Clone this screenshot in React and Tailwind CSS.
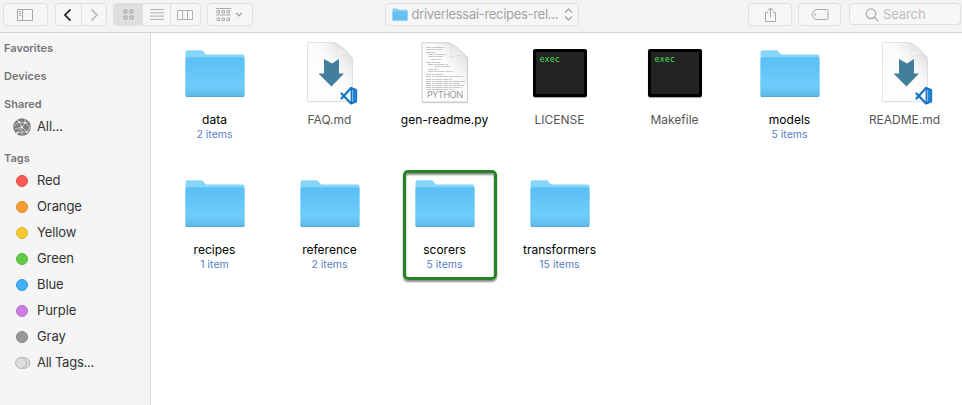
import React from "react";

const tags = [
  { name: "Red", dot: "bg-[#fc5b57] border-[#e64b48]" },
  { name: "Orange", dot: "bg-[#f79b33] border-[#e08a27]" },
  { name: "Yellow", dot: "bg-[#f5c933] border-[#e0b62b]" },
  { name: "Green", dot: "bg-[#64cb48] border-[#54b63b]" },
  { name: "Blue", dot: "bg-[#43aef5] border-[#309add]" },
  { name: "Purple", dot: "bg-[#cb7de0] border-[#b76acd]" },
  { name: "Gray", dot: "bg-[#98989a] border-[#838385]" },
];

const files = [
  { name: "data", kind: "folder", count: "2 items" },
  { name: "FAQ.md", kind: "md", dim: true },
  { name: "gen-readme.py", kind: "python" },
  { name: "LICENSE", kind: "exec", dim: true },
  { name: "Makefile", kind: "exec", dim: true },
  { name: "models", kind: "folder", count: "5 items" },
  { name: "README.md", kind: "md", dim: true },
  { name: "recipes", kind: "folder", count: "1 item" },
  { name: "reference", kind: "folder", count: "2 items" },
  { name: "scorers", kind: "folder", count: "5 items", marked: true },
  { name: "transformers", kind: "folder", count: "15 items" },
];

function Folder() {
  return (
    <svg width="64" height="64" viewBox="0 0 64 64">
      <defs>
        <linearGradient id="folderFront" x1="0" y1="0" x2="0" y2="1">
          <stop offset="0" stopColor="#5bbff4" />
          <stop offset="0.7" stopColor="#6dccfa" />
          <stop offset="0.82" stopColor="#69c6f5" />
          <stop offset="1" stopColor="#5fb5e2" />
        </linearGradient>
      </defs>
      <path d="M2.500 55V11.200q0-2 2-2H18q1.500 0 2.300 1l1.700 2.300q.8 1 2.300 1H59.500q2 0 2 2V55z" fill="#86d5fa" />
      <path d="M2.500 18q0-1.800 2-1.800h55q2 0 2 1.800v36.500q0 1.500-1.500 1.500H4q-1.500 0-1.500-1.500z" fill="url(#folderFront)" />
      <path d="M3 55.600h58" stroke="#5ba8d2" strokeWidth=".8" />
    </svg>
  );
}

function PageDefs() {
  return (
    <defs>
      <linearGradient id="paper" x1="0" y1="1" x2="1" y2="0">
        <stop offset="0" stopColor="#fff" />
        <stop offset=".6" stopColor="#fbfbfb" />
        <stop offset="1" stopColor="#d6d6d6" />
      </linearGradient>
      <linearGradient id="curl" x1="0" y1="1" x2="1" y2="0">
        <stop offset="0" stopColor="#fff" />
        <stop offset=".55" stopColor="#e4e4e4" />
        <stop offset="1" stopColor="#bebebe" />
      </linearGradient>
    </defs>
  );
}

function Markdown() {
  return (
    <svg width="64" height="64" viewBox="0 0 64 64" className="overflow-visible">
      <PageDefs />
      <path d="M9.500 1.500H36Q41.500 2.500 54.500 17V60.500H9.500z" fill="#000" fillOpacity=".1" transform="translate(0 .7)" />
      <path d="M9.500 1.500H36Q41.500 2.500 54.500 17V60.500H9.500z" fill="url(#paper)" stroke="#dadada" strokeWidth=".7" />
      <path d="M36 1.500Q41 4 38.500 15.500 49 12 54.500 17 46 5 36 1.500z" fill="url(#curl)" stroke="#d5d5d5" strokeWidth=".5" />
      <path d="M26 18l8 4.500 7-4.500v14.500h5L33.500 45.500 20.500 32.500h5.500z" fill="#417f9c" />
      <path d="M53 47l5 2v11.500l-5 2L43.500 52.500M53 47L43.500 57.500" fill="none" stroke="#1573c5" strokeWidth="2.200" strokeLinejoin="round" strokeLinecap="round" />
      <path d="M53.500 47v15.500" stroke="#1573c5" strokeWidth="1.800" />
      <path d="M55 48.500l3 1v10.500l-3 1z" fill="#1d86dc" />
    </svg>
  );
}

const codeLines = [
  [13, 6, 19], [13, 8, 16], [13, 11, 10], [15, 13, 18], [15, 15, 15], [18, 18, 11],
  [13, 21, 14], [15, 23, 20], [22, 25, 15], [15, 28, 10], [15, 30, 25], [13, 33, 18],
  [13, 35, 37], [13, 38, 26], [13, 40, 39], [13, 42, 34], [13, 44, 38], [13, 46, 36], [13, 48, 28],
];

function Python() {
  return (
    <svg width="64" height="64" viewBox="0 0 64 64" className="overflow-visible">
      <PageDefs />
      <path d="M9 1.800H35.500Q41 2.800 54.500 17V61.500H9z" fill="#000" fillOpacity=".15" transform="translate(0 .8)" />
      <path d="M9 1.800H35.500Q41 2.800 54.500 17V61H9z" fill="url(#paper)" stroke="#c6c6c6" strokeWidth=".9" />
      {codeLines.map(([x, y, w]) => (
        <path key={y} d={`M${x} ${y}.500h${w}`} stroke="#b8b8b8" strokeWidth=".8" strokeDasharray="5 .8 3 .6 7 1" />
      ))}
      <path d="M35.500 1.800Q41 5 37.500 16 49 12 54.500 17 46 5 35.500 1.800z" fill="url(#curl)" stroke="#ccc" strokeWidth=".5" />
      <text x="32" y="57" textAnchor="middle" fontSize="9" fontWeight="300" textLength="36" fill="#777">PYTHON</text>
    </svg>
  );
}

function Exec() {
  return (
    <div className="flex h-16 w-16 justify-center pt-2">
      <div className="h-12 w-[54px] rounded-[2px] border-[3px] border-black bg-[#222323] pl-[4px] pt-[2px] text-left font-['DejaVu_Sans_Mono',monospace] text-[8.5px] leading-[11px] text-[#4bdc5b] shadow-[0_1px_1px_rgba(0,0,0,0.35)]">
        exec
      </div>
    </div>
  );
}

const icons = { folder: Folder, md: Markdown, python: Python, exec: Exec };

function FileItem({ file }) {
  const Icon = icons[file.kind];
  return (
    <div className="relative flex h-[130px] flex-col items-center">
      <Icon />
      <div className={`mt-[7px] whitespace-nowrap text-[12px] leading-4 ${file.dim ? "text-[#555]" : "text-black"}`}>
        {file.name}
      </div>
      {file.count && (
        <div className="text-[10.500px] leading-[14px] text-[#5580c6]">{file.count}</div>
      )}
      {file.marked && (
        <div className="absolute -top-px left-4 h-[110px] w-[94px] rounded-[5px] border-[3px] border-[#278227] shadow-[0_2px_2px_rgba(0,0,0,0.45),inset_0_2px_2px_rgba(0,0,0,0.45)]" />
      )}
    </div>
  );
}

function Toolbar() {
  const box = "flex h-[23px] shrink-0 items-center justify-center rounded-[4px] border border-[#e0e0e0] bg-[#f6f6f6]";
  return (
    <header className="flex h-[33px] shrink-0 items-start border-b border-[#d2d2d2] bg-[#f3f3f3] pl-[3px] pt-[3px]">
      <div className={`${box} w-[45px] pr-[1px]`}>
        <svg width="16" height="12" viewBox="0 0 16 12" fill="none" stroke="#a9a9a9">
          <path d="M.500.500h15v11H.500zM5.500.500v11M2 2.500h2M2 4.500h2M2 6.500h2" />
        </svg>
      </div>
      <div className={`${box} ml-[7px] w-[52px]`}>
        <div className="flex h-full flex-1 items-center justify-center border-r border-[#e0e0e0]">
          <svg width="8" height="12" viewBox="0 0 8 12" fill="none" stroke="#1c1c1c" strokeWidth="1.700"><path d="M6.500.500L1 6l5.500 5.500" /></svg>
        </div>
        <div className="flex h-full flex-1 items-center justify-center">
          <svg width="8" height="12" viewBox="0 0 8 12" fill="none" stroke="#b3b3b3" strokeWidth="1.500"><path d="M1.500.500L7 6l-5.500 5.500" /></svg>
        </div>
      </div>
      <div className={`${box} ml-[6px] w-[88px] overflow-hidden`}>
        <div className="flex h-full w-[29px] items-center justify-center bg-[#dedede]">
          <svg width="11" height="11" viewBox="0 0 11 11" fill="none" stroke="#a0a0a0">
            <path d="M1 1h3v3H1zM7 1h3v3H7zM1 7h3v3H1zM7 7h3v3H7z" />
          </svg>
        </div>
        <div className="flex h-full flex-1 items-center justify-center border-r border-[#e0e0e0]">
          <svg width="14" height="11" viewBox="0 0 14 11" stroke="#b2b2b2"><path d="M0 .500h14M0 3.800h14M0 7.100h14M0 10.400h14" /></svg>
        </div>
        <div className="flex h-full w-[29px] items-center justify-center pr-[1px]">
          <svg width="16" height="10" viewBox="0 0 16 10" fill="none" stroke="#b0b0b0"><path d="M.500.500h15v9H.500zM5.500.500v9M10.500.500v9" /></svg>
        </div>
      </div>
      <div className={`${box} ml-[6px] w-[46px] gap-1 pr-[2px]`}>
        <svg width="15" height="14" viewBox="0 0 15 14" fill="none" stroke="#a9a9a9">
          <path d="M0 .500h15M0 7h15M1 2.500h2.500v2.500H1zM6 2.500h2.500v2.500H6zM11 2.500h2.500v2.500H11zM1 10h2.500v2.500H1zM6 10h2.500v2.500H6zM11 10h2.500v2.500H11z" />
        </svg>
        <svg width="8" height="5" viewBox="0 0 8 5" fill="none" stroke="#a6a6a6" strokeWidth="1.400"><path d="M1 .700l3 3 3-3" /></svg>
      </div>
      <div className={`${box} ml-[132px] w-[194px] text-[13px] text-[#a3a3a3]`}>
        <svg width="16" height="13" viewBox="0 0 16 13" className="mr-1">
          <path d="M.500 1.500q0-1 1-1H5l1 1.300h8.500q1 0 1 1V12.500H.500z" fill="#83ccf2" />
          <path d="M.500 3.500h15v9H.500z" fill="#67c1f0" />
        </svg>
        <span className="w-[147px] whitespace-nowrap pt-px tracking-[-0.3px]">driverlessai-recipes-rel...</span>
        <svg width="9" height="13" viewBox="0 0 9 13" fill="none" stroke="#a5a5a5" strokeWidth="1.300" className="ml-[5px]"><path d="M1 4.500L4.500 1 8 4.500M1 8.500L4.500 12 8 8.500" /></svg>
      </div>
      <div className={`${box} ml-[169px] w-[44px]`}>
        <svg width="13" height="16" viewBox="0 0 13 16" fill="none" stroke="#a9a9a9"><path d="M4 5.500H1.500v9h10v-9H9M6.500 10.500V1M3.500 4l3-3 3 3" /></svg>
      </div>
      <div className={`${box} ml-[6px] w-[43px]`}>
        <svg width="18" height="11" viewBox="0 0 18 11" fill="none" stroke="#a9a9a9">
          <path d="M5 .500h10.500q1.500 0 1.500 1.500v7q0 1.500-1.500 1.500H5Q3.500 10.500.700 5.500 3.500.500 5 .500z" /><circle cx="4" cy="5.500" r=".6" fill="#a9a9a9" />
        </svg>
      </div>
      <div className="ml-[8px] flex h-[22px] w-[112px] items-center rounded-[4px] border border-[#e0e0e0] bg-[#f7f7f7] pl-[15px] text-[13px] text-[#bdbdbd]">
        <svg width="14" height="14" viewBox="0 0 14 14" fill="none" stroke="#a8a8a8" strokeWidth="1.200" className="mr-[4px] mt-px"><circle cx="6" cy="5.800" r="4.900" /><path d="M9.500 9.300l4 4" /></svg>
        <span className="pt-[2px] tracking-[-0.1px]">Search</span>
      </div>
    </header>
  );
}

function Sidebar() {
  const heading = "pl-1 text-[11px] leading-7 font-semibold text-[#757575]";
  const row = "flex h-[26px] items-center text-[13px] tracking-[-0.1px] text-[#333]";
  return (
    <aside className="w-[151px] shrink-0 border-r border-[#d9d9d9] bg-[#f5f5f5] pt-[1px]">
      <div className={heading}>Favorites</div>
      <div className={heading}>Devices</div>
      <div className={heading}>Shared</div>
      <div className={`${row} -mt-[4px] pl-[13px]`}>
        <svg width="18" height="18" viewBox="0 0 18 18" className="mr-[6px]" fill="none">
          <circle cx="9" cy="9" r="8.800" fill="#7d7d7d" />
          <path d="M1 8L6 4l6 1 5 4M6 4l3 5-5 6M9 9l3-4V1M9 9l5 5M9 9L2 11M4 15l5-1 5 0 3-5M9 9v8M6 4L4 2M12 5l3-1" stroke="#ddd" strokeWidth=".8" />
          <g fill="#eee"><circle cx="9" cy="9" r="1.100" /><circle cx="6" cy="4" r="1" /><circle cx="12" cy="5" r="1" /><circle cx="14" cy="14" r="1" /><circle cx="4" cy="15" r="1" /></g>
        </svg>
        All...
      </div>
      <div className={`${heading} mt-[4px]`}>Tags</div>
      <div className="-mt-[4px]">
        {tags.map((tag) => (
          <div key={tag.name} className={`${row} pl-[16px]`}>
            <span className={`mr-[9px] h-[12px] w-[12px] rounded-full border ${tag.dot}`} />
            {tag.name}
          </div>
        ))}
        <div className={`${row} pl-[15px] tracking-[-0.25px]`}>
          <svg width="16" height="12" viewBox="0 0 16 12" className="mr-[6px]" fill="#dedede" stroke="#b0b0b0">
            <circle cx="9.500" cy="6" r="5.300" /><circle cx="6" cy="6" r="5.400" />
          </svg>
          All Tags...
        </div>
      </div>
    </aside>
  );
}

export default function App() {
  return (
    <div className="flex h-[405px] w-[962px] flex-col overflow-hidden bg-white font-[Inter,sans-serif]">
      <Toolbar />
      <div className="flex min-h-0 flex-1">
        <Sidebar />
        <main className="flex-1 pl-[6px] pt-[8px]">
          <div className="grid grid-cols-7">
            {files.map((file) => <FileItem key={file.name} file={file} />)}
          </div>
        </main>
      </div>
    </div>
  );
}
